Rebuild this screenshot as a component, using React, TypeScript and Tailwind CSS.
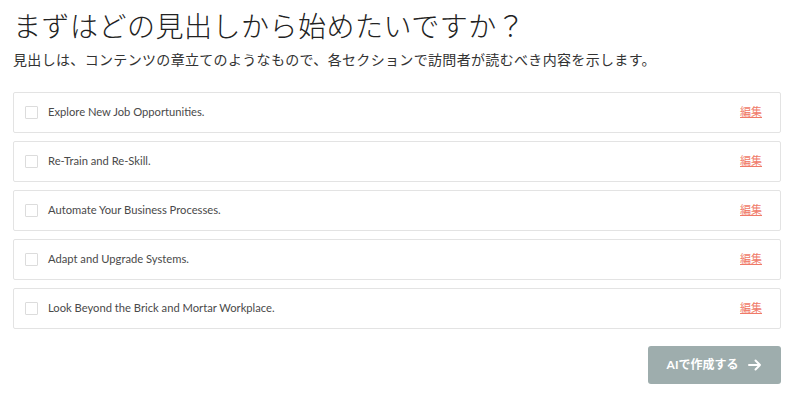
import React from "react";

const items = [
  "Explore New Job Opportunities.",
  "Re-Train and Re-Skill.",
  "Automate Your Business Processes.",
  "Adapt and Upgrade Systems.",
  "Look Beyond the Brick and Mortar Workplace.",
];

export default function App() {
  return (
    <div className="w-[800px] h-[402px] bg-white overflow-hidden" style={{ fontFamily: 'Lato, "Noto Sans CJK JP", sans-serif' }}>
      <div className="ml-[13px] w-[768px] pt-[6px]">
        <h1 className="text-[28px] leading-[38px] text-[#222] font-light tracking-[0.5px]" style={{ fontFamily: '"Noto Sans CJK JP", sans-serif' }}>
          まずはどの見出しから始めたいですか？
        </h1>
        <p className="mt-[4px] text-[14px] leading-[22px] text-[#333] tracking-[0.33px]" style={{ fontFamily: '"Noto Sans CJK JP", sans-serif' }}>
          見出しは、コンテンツの章立てのようなもので、各セクションで訪問者が読むべき内容を示します。
        </p>
        <div className="mt-[22px] flex flex-col gap-[8px]">
          {items.map((t) => (
            <div key={t} className="h-[41px] border border-[#e3e3e3] rounded-[2px] flex items-center pl-[11px] pr-[18px]">
              <span className="w-[13px] h-[13px] border border-[#dcdcdc] rounded-[1px] shrink-0" />
              <span className="ml-[10px] text-[11.2px] text-[#4a4a4a] flex-1">{t}</span>
              <a className="text-[11px] leading-[14px] text-[#f07a68] underline underline-offset-1 decoration-[0.5px] -mt-[3px]" style={{ fontFamily: '"Noto Sans CJK JP", sans-serif' }}>
                編集
              </a>
            </div>
          ))}
        </div>
        <div className="mt-[17px] flex justify-end">
          <button className="w-[133px] h-[38px] bg-[#9eadad] rounded-[3px] text-white text-[12px] font-bold flex items-center justify-center gap-[10px]" style={{ fontFamily: 'Lato, "Noto Sans CJK JP", sans-serif' }}>
            <span>AIで作成する</span>
            <svg width="14" height="12" viewBox="0 0 14 12" fill="none" stroke="white" strokeWidth="2" strokeLinecap="round" strokeLinejoin="round">
              <path d="M1 6h11M7.5 1.5 12 6l-4.5 4.5" />
            </svg>
          </button>
        </div>
      </div>
    </div>
  );
}
